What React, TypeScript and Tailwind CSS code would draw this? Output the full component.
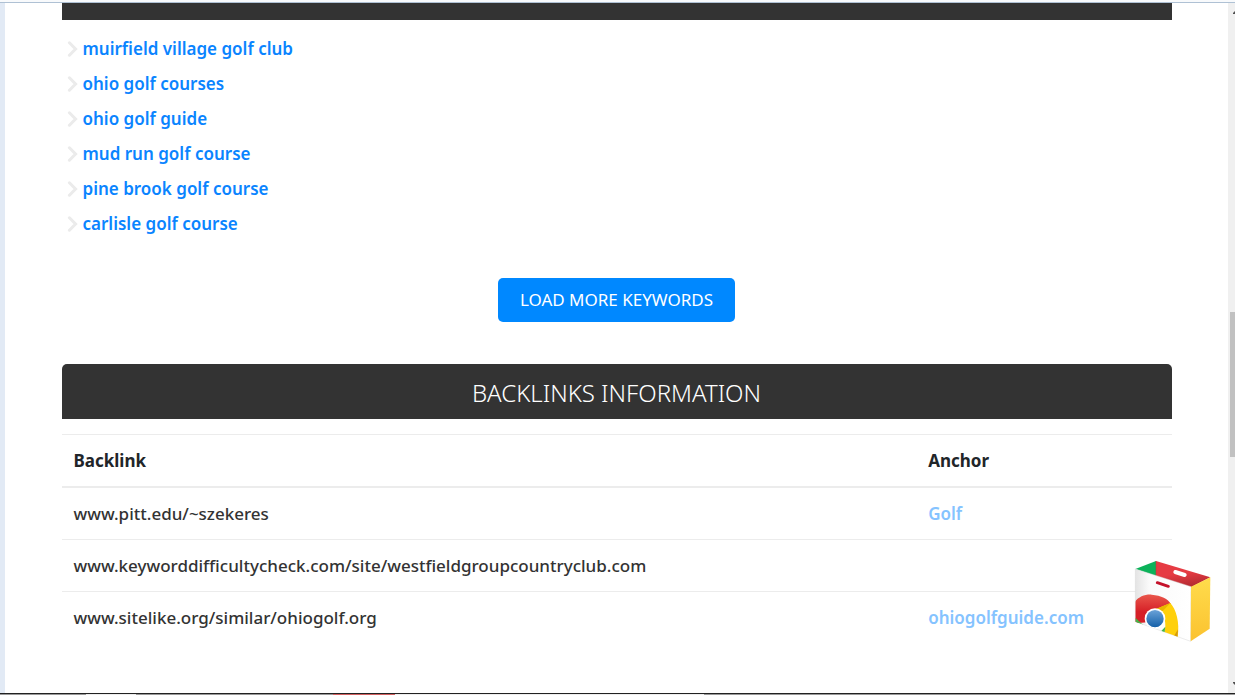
const keywords = [
  'muirfield village golf club',
  'ohio golf courses',
  'ohio golf guide',
  'mud run golf course',
  'pine brook golf course',
  'carlisle golf course',
];

const backlinks = [
  { url: 'www.pitt.edu/~szekeres', anchor: 'Golf' },
  { url: 'www.keyworddifficultycheck.com/site/westfieldgroupcountryclub.com', anchor: '' },
  { url: 'www.sitelike.org/similar/ohiogolf.org', anchor: 'ohiogolfguide.com' },
];

function Chevron() {
  return (
    <svg className="h-4 w-3 shrink-0" viewBox="0 0 12 16" fill="none" aria-hidden="true">
      <path d="M2.4 1.8 L8.6 8 L2.4 14.2" stroke="#ebebeb" strokeWidth="3" strokeLinecap="round" />
    </svg>
  );
}

function StoreBag() {
  return (
    <svg className="block h-[83px] w-[77px]" viewBox="42 30 231 249" aria-hidden="true">
      <defs>
        <linearGradient id="front" x1="0" y1="0" x2="1" y2="0">
          <stop offset="0" stopColor="#e4e4e4" />
          <stop offset="0.25" stopColor="#fafafa" />
          <stop offset="1" stopColor="#ffffff" />
        </linearGradient>
        <linearGradient id="side" x1="0" y1="0" x2="0" y2="1">
          <stop offset="0" stopColor="#ffdc4c" />
          <stop offset="1" stopColor="#fbc22f" />
        </linearGradient>
        <linearGradient id="inner" x1="0" y1="0" x2="0.3" y2="1">
          <stop offset="0.55" stopColor="#e63b43" />
          <stop offset="1" stopColor="#b82c33" />
        </linearGradient>
        <linearGradient id="ringRed" x1="0" y1="0" x2="0" y2="1">
          <stop offset="0" stopColor="#e9564b" />
          <stop offset="0.6" stopColor="#d62027" />
        </linearGradient>
        <linearGradient id="hub" x1="0" y1="0" x2="0" y2="1">
          <stop offset="0" stopColor="#6aa2d8" />
          <stop offset="1" stopColor="#1460a8" />
        </linearGradient>
        <clipPath id="frontClip">
          <path d="M46 57 L213 110 L212 274 L46 215 Z" />
        </clipPath>
      </defs>
      <path d="M46 57 L108 33 L108 78 Z" fill="#0cb25a" />
      <path d="M108 33 L271 82 L213 112 L108 78 Z" fill="url(#inner)" />
      <path d="M108 33 V76" stroke="#b5353a" strokeWidth="1.5" />
      <path d="M166 66 L194 75" stroke="#fff" strokeWidth="12" strokeLinecap="round" />
      <path d="M46 57 L213 110 L212 274 L46 215 Z" fill="url(#front)" stroke="#d8d8d8" strokeWidth="1.5" />
      <path d="M213 110 L271 82 L269 236 L212 274 Z" fill="url(#side)" />
      <g clipPath="url(#frontClip)">
        <path d="M36 180 C38 150 66 132 95 134 C124 136 144 147 153 162 L112 181 L84 217 L36 220 Z" fill="url(#ringRed)" />
        <path d="M151 159 C168 178 180 215 173 262 L132 250 C142 220 134 190 108 177 Z" fill="#ffd00b" />
        <path d="M151 159 L108 177 L125 187 Z" fill="#e9b500" />
        <path d="M46 203 L70 226 L46 220 Z" fill="#43b649" />
        <path d="M124 243 L136 230 L133 251 Z" fill="#43b649" />
        <path d="M160 262 L174 238 L172 264 Z" fill="#d49a10" />
        <circle cx="105" cy="206" r="31" fill="#fff" />
        <circle cx="105" cy="206" r="26" fill="url(#hub)" />
      </g>
      <path d="M112 98 L145 109" stroke="#c4122a" strokeWidth="9" strokeLinecap="round" />
    </svg>
  );
}

export default function App() {
  return (
    <div className="flex min-h-screen flex-col bg-white font-['Noto_Sans','Open_Sans',sans-serif] text-[17px] text-[#333]">
      <div className="h-[3px] border-b border-[#afc1d4] bg-[#f8fafc]" />
      <div className="flex grow">
        <div className="w-[5px] shrink-0 bg-[#e2eaf5]" />
        <main className="min-w-0 grow">
          <div className="mx-auto max-w-[1110px]">
            <div className="h-[17px] bg-[#333]" />
            <ul className="pt-[11px]">
              {keywords.map((keyword) => (
                <li key={keyword} className="flex h-[35px] items-center gap-1 pl-[5px]">
                  <Chevron />
                  <a href="#" className="font-semibold text-[#0a84ff]">{keyword}</a>
                </li>
              ))}
            </ul>
            <div className="flex justify-center pt-[37px]">
              <button type="button" className="h-11 rounded-[5px] bg-[#0088ff] px-[22px] text-white">
                LOAD MORE KEYWORDS
              </button>
            </div>
            <h2 className="mt-[42px] h-[55px] rounded-t-[5px] bg-[#333] pt-px text-center text-2xl leading-[56px] font-light text-white">
              BACKLINKS INFORMATION
            </h2>
            <table className="mt-[15px] w-full table-fixed border-separate border-spacing-0 text-left">
              <thead>
                <tr className="text-[#212529]">
                  <th className="h-[54px] w-[77%] border-t border-b-2 border-[#ececec] px-3 py-0 font-bold">Backlink</th>
                  <th className="h-[54px] border-t border-b-2 border-[#ececec] px-3 py-0 font-bold">Anchor</th>
                </tr>
              </thead>
              <tbody className="[&>tr:last-child>td]:border-transparent">
                {backlinks.map(({ url, anchor }) => (
                  <tr key={url}>
                    <td className="h-[52px] border-b border-[#ececec] px-3 py-0 font-medium">{url}</td>
                    <td className="h-[52px] border-b border-[#ececec] px-3 py-0 font-semibold">
                      {anchor && <a href="#" className="text-[#85c3ff]">{anchor}</a>}
                    </td>
                  </tr>
                ))}
              </tbody>
            </table>
          </div>
        </main>
        <div className="flex w-[7px] shrink-0 flex-col items-end bg-[#f0f0f0] py-2" aria-hidden="true">
          <svg className="h-[3px] w-[2px]" viewBox="0 0 2 3"><path d="M2 0 V3 H0 V2 Z" fill="#505050" /></svg>
          <div className="grow-[298]" />
          <div className="h-[145px] w-[5px] bg-[#c1c1c1]" />
          <div className="grow-[225]" />
          <svg className="h-[3px] w-[2px]" viewBox="0 0 2 3"><path d="M2 3 V0 H0 V1 Z" fill="#505050" /></svg>
        </div>
      </div>
      <div className="flex h-[2px] border-t border-[#222] bg-[#999]" aria-hidden="true">
        <div className="w-[7%]" />
        <div className="w-[4%] bg-[#eee]" />
        <div className="w-[16%]" />
        <div className="w-[5%] bg-[#d26060]" />
        <div className="w-[25%] bg-[#eee]" />
      </div>
      <a href="#" aria-label="Chrome Web Store" className="fixed right-6 bottom-[52px]">
        <StoreBag />
      </a>
    </div>
  );
}
